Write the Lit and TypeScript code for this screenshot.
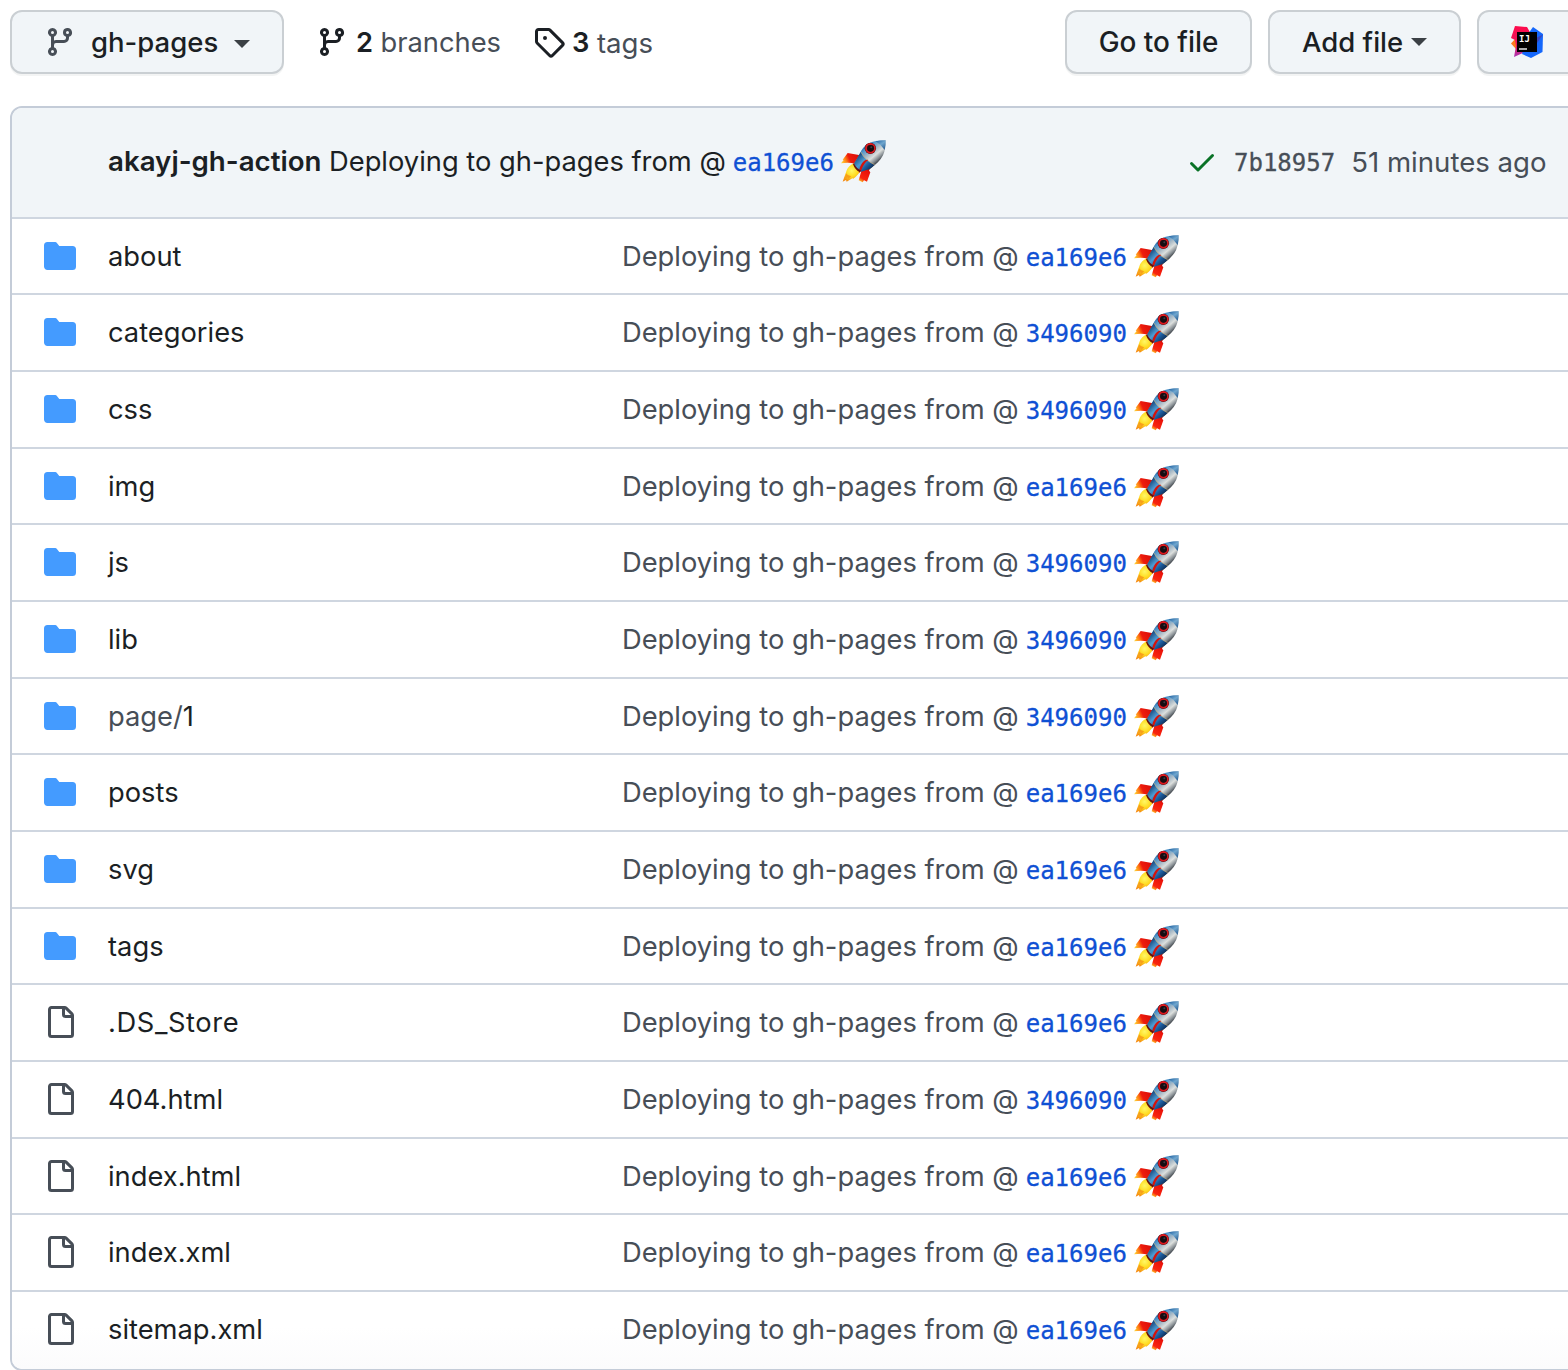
import { LitElement, html, svg, css } from "lit";
import { customElement, property } from "lit/decorators.js";

const ICONS: Record<string, string> = {
  branch:
    "M11.75 2.5a.75.75 0 100 1.5.75.75 0 000-1.5zm-2.25.75a2.25 2.25 0 113 2.122V6A2.5 2.5 0 0110 8.5H6a1 1 0 00-1 1v1.128a2.251 2.251 0 11-1.5 0V5.372a2.25 2.25 0 111.5 0v1.836A2.492 2.492 0 016 7h4a1 1 0 001-1v-.628A2.25 2.25 0 019.5 3.25zM4.25 12a.75.75 0 100 1.5.75.75 0 000-1.5zM3.5 3.25a.75.75 0 111.5 0 .75.75 0 01-1.5 0z",
  tag: "M2.5 7.775V2.75a.25.25 0 01.25-.25h5.025a.25.25 0 01.177.073l6.25 6.25a.25.25 0 010 .354l-5.025 5.025a.25.25 0 01-.354 0l-6.25-6.25a.25.25 0 01-.073-.177zm-1.5 0V2.75C1 1.784 1.784 1 2.75 1h5.025c.464 0 .91.184 1.238.513l6.25 6.25a1.75 1.75 0 010 2.474l-5.026 5.026a1.75 1.75 0 01-2.474 0l-6.25-6.25A1.75 1.75 0 011 7.775zM6 5a1 1 0 100 2 1 1 0 000-2z",
  file: "M2 1.75C2 .784 2.784 0 3.75 0h6.586c.464 0 .909.184 1.237.513l2.914 2.914c.329.328.513.773.513 1.237v9.586A1.75 1.75 0 0113.25 16h-9.5A1.75 1.75 0 012 14.25V1.75zm1.75-.25a.25.25 0 00-.25.25v12.5c0 .138.112.25.25.25h9.5a.25.25 0 00.25-.25V6h-2.75A1.75 1.75 0 019 4.25V1.5H3.75zm6.75.062V4.25c0 .138.112.25.25.25h2.688a.252.252 0 00-.011-.013l-2.914-2.914a.272.272 0 00-.013-.011z",
  folder:
    "M1.75 1A1.75 1.75 0 000 2.75v10.5C0 14.216.784 15 1.75 15h12.5A1.75 1.75 0 0016 13.25v-8.5A1.75 1.75 0 0014.25 3h-6.5a.25.25 0 01-.2-.1l-.9-1.2c-.33-.44-.85-.7-1.4-.7h-3.5z",
  check:
    "M13.78 4.22a.75.75 0 010 1.06l-7.25 7.25a.75.75 0 01-1.06 0L2.22 9.28a.75.75 0 011.06-1.06L6 10.94l6.72-6.72a.75.75 0 011.06 0z",
};

const A = "ea169e6";
const B = "3496090";

interface Entry {
  name: string;
  parent?: string;
  kind: "folder" | "file";
  sha: string;
}

const ENTRIES: Entry[] = [
  { name: "about", kind: "folder", sha: A },
  { name: "categories", kind: "folder", sha: B },
  { name: "css", kind: "folder", sha: B },
  { name: "img", kind: "folder", sha: A },
  { name: "js", kind: "folder", sha: B },
  { name: "lib", kind: "folder", sha: B },
  { name: "1", parent: "page/", kind: "folder", sha: B },
  { name: "posts", kind: "folder", sha: A },
  { name: "svg", kind: "folder", sha: A },
  { name: "tags", kind: "folder", sha: A },
  { name: ".DS_Store", kind: "file", sha: A },
  { name: "404.html", kind: "file", sha: B },
  { name: "index.html", kind: "file", sha: A },
  { name: "index.xml", kind: "file", sha: A },
  { name: "sitemap.xml", kind: "file", sha: A },
];

@customElement("oct-icon")
class OctIcon extends LitElement {
  @property() name = "file";
  static styles = css`
    :host { display: block; width: 32px; height: 32px; flex: none; }
    .icon { display: block; width: 32px; height: 32px; fill: currentColor; }
  `;
  render() {
    return html`<svg class="icon" viewBox="0 0 16 16">${svg`<path fill-rule="evenodd" d=${ICONS[this.name]}></path>`}</svg>`;
  }
}

@customElement("rocket-icon")
class RocketIcon extends LitElement {
  static styles = css`
    :host { display: block; width: 45px; height: 43px; flex: none; }
    .art { display: block; width: 45px; height: 43px; overflow: visible; }
  `;
  render() {
    return html`<svg class="art" viewBox="0 0 135 129">
      <defs>
        <linearGradient id="hull" gradientUnits="userSpaceOnUse" x1="68" y1="14" x2="112" y2="66">
          <stop offset="0" stop-color="#1b5a96"></stop>
          <stop offset=".22" stop-color="#4f96cc"></stop>
          <stop offset=".48" stop-color="#a9bac6"></stop>
          <stop offset=".68" stop-color="#dcdfdd"></stop>
          <stop offset=".86" stop-color="#8a9196"></stop>
          <stop offset="1" stop-color="#3c4147"></stop>
        </linearGradient>
        <linearGradient id="base" gradientUnits="userSpaceOnUse" x1="46" y1="52" x2="86" y2="92">
          <stop offset="0" stop-color="#194b80"></stop>
          <stop offset=".4" stop-color="#4f9dd4"></stop>
          <stop offset=".7" stop-color="#1d5c9e"></stop>
          <stop offset="1" stop-color="#0c2d57"></stop>
        </linearGradient>
        <linearGradient id="finl" gradientUnits="userSpaceOnUse" x1="2" y1="68" x2="52" y2="46">
          <stop offset="0" stop-color="#ffd83a"></stop>
          <stop offset=".28" stop-color="#ff7a12"></stop>
          <stop offset=".48" stop-color="#ee1c0c"></stop>
          <stop offset="1" stop-color="#d90e08"></stop>
        </linearGradient>
        <linearGradient id="finr" gradientUnits="userSpaceOnUse" x1="60" y1="124" x2="84" y2="84">
          <stop offset="0" stop-color="#ffae22"></stop>
          <stop offset=".2" stop-color="#f8260f"></stop>
          <stop offset=".75" stop-color="#ea120a"></stop>
          <stop offset="1" stop-color="#a00b08"></stop>
        </linearGradient>
        <radialGradient id="fire" gradientUnits="userSpaceOnUse" cx="32" cy="92" r="34">
          <stop offset="0" stop-color="#fff766"></stop>
          <stop offset=".5" stop-color="#ffdc22"></stop>
          <stop offset="1" stop-color="#f58a10"></stop>
        </radialGradient>
        <linearGradient id="tip" gradientUnits="userSpaceOnUse" x1="112" y1="0" x2="130" y2="28">
          <stop offset="0" stop-color="#2a6ba8"></stop>
          <stop offset=".45" stop-color="#6fa6ce"></stop>
          <stop offset="1" stop-color="#2a5f94"></stop>
        </linearGradient>
      </defs>
      <path fill="url(#finl)" d="M20 39 L58 46 L42 72 Q26 66 0 70 L8 60 L5 59 Z"></path>
      <path fill="url(#finr)" d="M92 76 L84 92 L88 97 L78 125 L69 121 L65 127 L53 121 L62 90 Z"></path>
      <path fill="url(#fire)" d="M40 70 Q22 76 16 94 L5 125 L15 120 L17 125 L34 115 L37 116 Q54 104 59 90 Z"></path>
      <path fill="#f7a01a" d="M16 100 L9 120 L19 112 L22 117 L31 108 Q20 109 16 100 Z"></path>
      <path fill="url(#hull)" d="M134 1 Q102 1 82 11 Q64 20 55 44 L40 70 Q46 88 62 93 L88 86 Q116 66 126 46 Q135 26 134 1 Z"></path>
      <path fill="url(#base)" d="M59 36 Q71 62 101 74 Q94 81 85 87 L61 95 Q44 89 39 71 Z"></path>
      <path fill="none" stroke="#c8ad74" stroke-width="2" d="M60 36 Q73 62 101 74"></path>
      <path fill="url(#tip)" d="M134 1 Q119 1 104 4 Q119 13 131 30 Q135 16 134 1 Z"></path>
      <path fill="#d5140c" d="M82 60 Q68 69 61 91 L54 100 Q54 80 66 66 Q74 58 82 60 Z"></path>
      <path fill="#66110c" d="M39 70 Q46 86 60 92 L57 97 Q42 90 36 73 Z"></path>
      <circle cx="88" cy="25" r="17" fill="#4a1114"></circle>
      <circle cx="88" cy="25" r="13" fill="none" stroke="#dc1a20" stroke-width="5.500"></circle>
      <circle cx="89" cy="25" r="10" fill="#170c10"></circle>
      <circle cx="91" cy="22" r="3" fill="#3a3a44"></circle>
    </svg>`;
  }
}

@customElement("idea-logo")
class IdeaLogo extends LitElement {
  static styles = css`
    :host { display: block; width: 32px; height: 32px; flex: none; }
    .logo { display: block; width: 32px; height: 32px; }
    .mono { font: 700 9px "DejaVu Sans Mono", monospace; fill: #fff; }
  `;
  render() {
    return html`<svg class="logo" viewBox="0 0 32 32">
      <defs>
        <linearGradient id="pk" x1="0" y1="0" x2="0" y2="1">
          <stop offset="0" stop-color="#fe0a4c"></stop>
          <stop offset=".6" stop-color="#e8185c"></stop>
          <stop offset="1" stop-color="#a737b4"></stop>
        </linearGradient>
      </defs>
      <path fill="#fc7a1c" d="M5 12 L0 17.500 L5 23 L9 17 Z"></path>
      <path fill="url(#pk)" d="M4 0 L16 1 L20 8 L14 26 L3 31 L5 20 L4 14 L0 12 Z"></path>
      <path fill="#1467fb" d="M22 1 L32 8 L31.500 26 L20 32 L11 28 L17 8 Z"></path>
      <path fill="#3b45b8" d="M25 12 L32 8.500 L26 17 Z"></path>
      <path fill="#000" d="M6 6h20v20H6z"></path>
      <path fill="#d8d8d8" d="M8 22.200h8v1.600H8z"></path>
      <text class="mono" x="8" y="15.500">IJ</text>
    </svg>`;
  }
}

@customElement("app-root")
class AppRoot extends LitElement {
  static styles = css`
    :host {
      display: block;
      width: 100%;
      height: 1370px;
      overflow: hidden;
      background: #fff;
      color: #1b1f24;
      font-family: Inter, "Liberation Sans", sans-serif;
      font-size: 27.3px;
      line-height: 40px;
      white-space: nowrap;
    }
    .page { width: 1600px; padding: 10px 0 0 10px; box-sizing: border-box; }
    .bar { display: flex; align-items: center; height: 64px; margin-bottom: 32px; }
    .btn {
      display: flex;
      align-items: center;
      box-sizing: border-box;
      height: 64px;
      border: 2px solid #cacfd3;
      border-radius: 12px;
      background: #f1f5f8;
      box-shadow: 0 2px 0 rgba(27, 31, 36, 0.05);
      font-weight: 500;
      font-size: 27.5px;
      flex: none;
    }
    .ref { width: 274px; padding-left: 32px; }
    .ref .icon { color: #474e57; margin-right: 15px; }
    .num, .unit { padding-top: 1px; }
    .label { padding-bottom: 1px; }
    .ref .label { width: 126px; }
    .caret { width: 0; height: 0; border: 8px solid transparent; border-top-color: #3b4045; border-bottom: 0; }
    .ref .caret { margin: 4px 0 0 17px; }
    .count { display: flex; align-items: center; }
    .branches { margin-left: 32px; width: 217px; }
    .num { font-weight: 600; margin: 0 7.5px 0 8px; }
    .tags .num { margin-left: 7px; }
    .tags .unit { font-size: 27.6px; }
    .unit, .muted { color: #474e57; }
    .actions { display: flex; gap: 16px; margin-left: auto; width: 535px; }
    .goto { width: 187px; justify-content: center; font-size: 27.9px; }
    .add { width: 193px; padding-left: 32px; }
    .add .label { width: 101px; }
    .add .caret { margin-left: 8px; }
    .ide { width: 130px; padding-left: 32px; }
    .box { border: 2px solid #c4ccd8; border-radius: 12px; overflow: hidden; width: 1600px; }
    .head {
      display: flex;
      align-items: center;
      box-sizing: border-box;
      height: 109px;
      padding: 0 0 2px 96px;
      background: #f1f5f8;
    }
    .author { font-weight: 600; font-size: 27.7px; margin-right: 7.5px; padding-bottom: 2px; }
    .mono {
      font-family: "DejaVu Sans Mono", monospace;
      font-size: 24px;
      padding-top: 2px;
      -webkit-text-stroke: 0.3px currentColor;
    }
    .sha { color: #0f50d4; margin: 0 7px 0 7px; }
    .status { display: flex; align-items: center; margin-left: auto; width: 426px; }
    .ok { color: #0a7227; margin-right: 16px; }
    .when { margin-left: 16px; font-size: 27.6px; }
    .row {
      display: grid;
      grid-template-columns: 64px 514px 1fr;
      align-items: start;
      box-sizing: border-box;
      height: 77px;
      padding: 16px 0 0 32px;
      border-top: 2px solid #cfd6e0;
    }
    .row:nth-child(3n + 2) { height: 76px; }
    .row:last-child { height: 79px; background: linear-gradient(#fff 45%, #fbfbfc); }
    .folder, .file { margin-top: 5px; }
    .folder { color: #449bff; }
    .file { color: #474e57; }
    .name { padding-top: 2px; }
    .msg { display: flex; align-items: center; height: 43px; }
    .msg .text { padding-top: 1px; }
    .msg .mono { padding-top: 3px; }
    .dots { letter-spacing: 0.6px; }
  `;

  render() {
    return html`<div class="page">
      <div class="bar">
        <div class="btn ref">
          <oct-icon class="icon" name="branch"></oct-icon>
          <span class="label">gh-pages</span><span class="caret"></span>
        </div>
        <div class="count branches">
          <oct-icon name="branch"></oct-icon><span class="num">2</span><span class="unit">branches</span>
        </div>
        <div class="count tags">
          <oct-icon name="tag"></oct-icon><span class="num">3</span><span class="unit">tags</span>
        </div>
        <div class="actions">
          <div class="btn goto"><span class="label">Go to file</span></div>
          <div class="btn add"><span class="label">Add file</span><span class="caret"></span></div>
          <div class="btn ide"><idea-logo></idea-logo></div>
        </div>
      </div>
      <div class="box">
        <div class="head">
          <span class="author">akayj-gh-action</span>
          <span class="text">Deploying to gh-pages from @</span>
          <span class="mono sha">ea169e6</span><rocket-icon></rocket-icon>
          <div class="status muted">
            <oct-icon class="ok" name="check"></oct-icon>
            <span class="mono">7b18957</span><span class="when">51 minutes ago</span>
          </div>
        </div>
        ${ENTRIES.map(
          (e) => html`<div class="row">
            <oct-icon class=${e.kind} name=${e.kind}></oct-icon>
            <span class="name ${e.name.includes("_") ? "dots" : ""}"><span class="muted">${e.parent ?? ""}</span>${e.name}</span>
            <div class="msg muted">
              <span class="text">Deploying to gh-pages from @</span>
              <span class="mono sha">${e.sha}</span><rocket-icon></rocket-icon>
            </div>
          </div>`
        )}
      </div>
    </div>`;
  }
}
